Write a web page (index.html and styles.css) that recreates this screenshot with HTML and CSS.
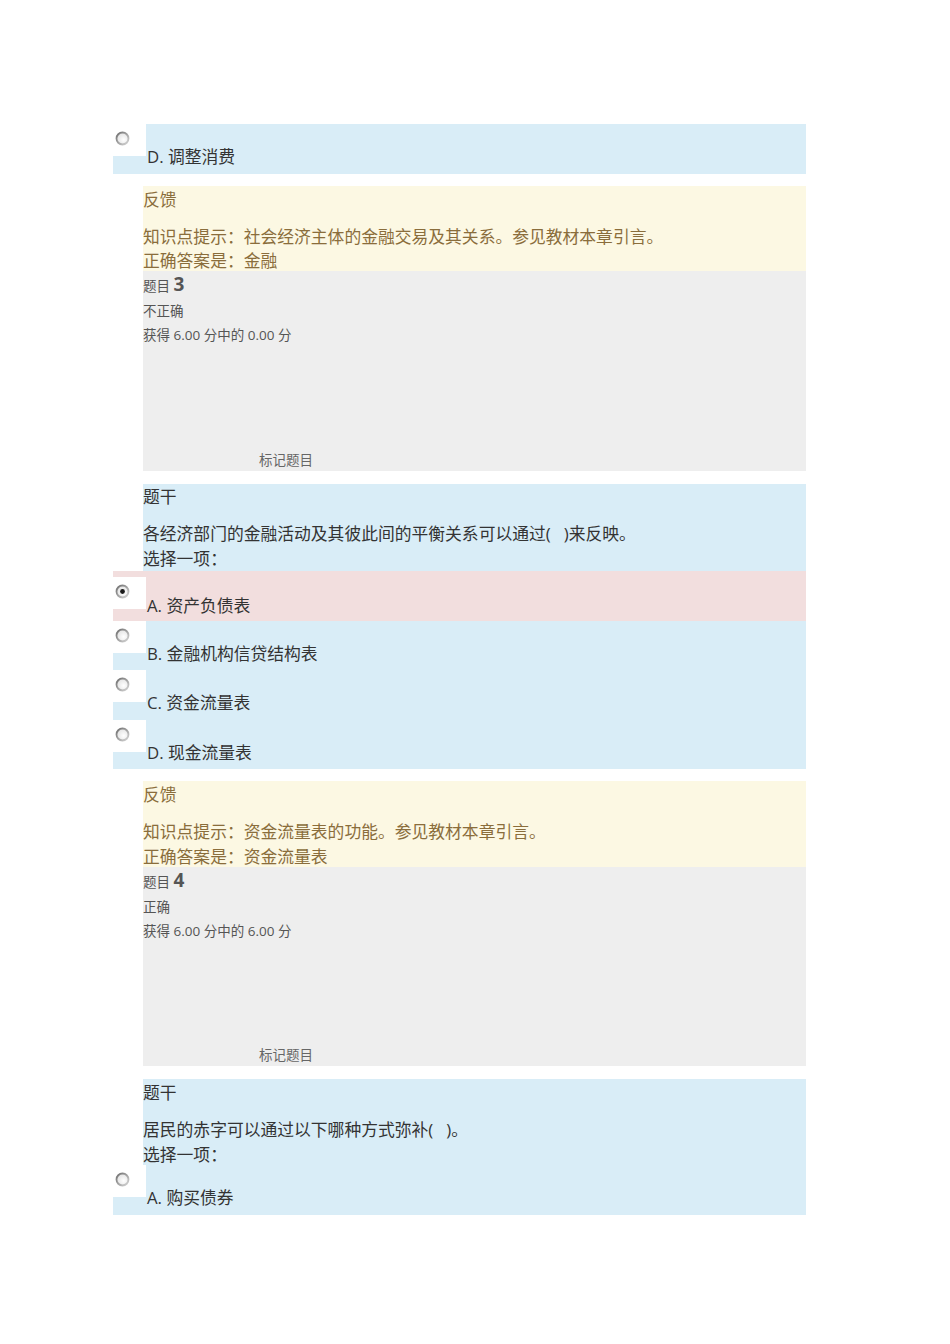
FILE: index.html
```html
<!DOCTYPE html>
<html lang="zh-CN">
<head>
<meta charset="utf-8">
<title>测验</title>
<link rel="stylesheet" href="styles.css">
</head>
<body>
<div class="page">

  <div class="opt info first">
    <div class="radio-box"><svg class="radio" width="15" height="15" viewBox="0 0 15 15"><defs><linearGradient id="rg1" x1="0" y1="0" x2="1" y2="1"><stop offset="0" stop-color="#6e6e6e"/><stop offset="1" stop-color="#d6d6d6"/></linearGradient><radialGradient id="rf1" cx="0.6" cy="0.6" r="0.6"><stop offset="0" stop-color="#ffffff"/><stop offset="1" stop-color="#e2e2e2"/></radialGradient></defs><circle cx="7.5" cy="7.5" r="6" fill="url(#rf1)" stroke="url(#rg1)" stroke-width="1.8"/></svg></div>
    <div class="label">D. 调整消费</div>
  </div>

  <div class="feedback">
    <div class="head">反馈</div>
    <div class="line">知识点提示：社会经济主体的金融交易及其关系。参见教材本章引言。</div>
    <div class="line">正确答案是：金融</div>
  </div>

  <div class="qinfo">
    <div class="no">题目 <span class="num">3</span></div>
    <div class="state">不正确</div>
    <div class="grade">获得 6.00 分中的 0.00 分</div>
    <div class="flag">标记题目</div>
  </div>

  <div class="qtext">
    <div class="head">题干</div>
    <div class="line">各经济部门的金融活动及其彼此间的平衡关系可以通过(&nbsp;&nbsp;&nbsp;)来反映。</div>
    <div class="line">选择一项：</div>
  </div>
  <div class="opt wrong">
    <div class="radio-box"><svg class="radio" width="15" height="15" viewBox="0 0 15 15"><circle cx="7.5" cy="7.5" r="6" fill="url(#rf1)" stroke="url(#rg1)" stroke-width="1.8"/><circle cx="7.5" cy="7.5" r="2.4" fill="#1a1a1a"/></svg></div>
    <div class="label">A. 资产负债表</div>
  </div>
  <div class="opt info">
    <div class="radio-box"><svg class="radio" width="15" height="15" viewBox="0 0 15 15"><circle cx="7.5" cy="7.5" r="6" fill="url(#rf1)" stroke="url(#rg1)" stroke-width="1.8"/></svg></div>
    <div class="label">B. 金融机构信贷结构表</div>
  </div>
  <div class="opt info">
    <div class="radio-box"><svg class="radio" width="15" height="15" viewBox="0 0 15 15"><circle cx="7.5" cy="7.5" r="6" fill="url(#rf1)" stroke="url(#rg1)" stroke-width="1.8"/></svg></div>
    <div class="label">C. 资金流量表</div>
  </div>
  <div class="opt info">
    <div class="radio-box"><svg class="radio" width="15" height="15" viewBox="0 0 15 15"><circle cx="7.5" cy="7.5" r="6" fill="url(#rf1)" stroke="url(#rg1)" stroke-width="1.8"/></svg></div>
    <div class="label">D. 现金流量表</div>
  </div>

  <div class="feedback second">
    <div class="head">反馈</div>
    <div class="line">知识点提示：资金流量表的功能。参见教材本章引言。</div>
    <div class="line">正确答案是：资金流量表</div>
  </div>

  <div class="qinfo second">
    <div class="no">题目 <span class="num">4</span></div>
    <div class="state">正确</div>
    <div class="grade">获得 6.00 分中的 6.00 分</div>
    <div class="flag">标记题目</div>
  </div>

  <div class="qtext second">
    <div class="head">题干</div>
    <div class="line">居民的赤字可以通过以下哪种方式弥补(&nbsp;&nbsp;&nbsp;)。</div>
    <div class="line">选择一项：</div>
  </div>
  <div class="opt info last">
    <div class="radio-box"><svg class="radio" width="15" height="15" viewBox="0 0 15 15"><circle cx="7.5" cy="7.5" r="6" fill="url(#rf1)" stroke="url(#rg1)" stroke-width="1.8"/></svg></div>
    <div class="label">A. 购买债券</div>
  </div>

</div>
</body>
</html>
```

FILE: styles.css
```css
html, body {
  margin: 0;
  padding: 0;
  background: #ffffff;
}

body {
  font-family: "Open Sans", "Noto Sans CJK SC", sans-serif;
  color: #333333;
  font-size: 16.8px;
}

.page {
  width: 693px;
  margin-left: 113px;
  padding-top: 124px;
  display: flex;
  flex-direction: column;
}

/* option rows */
.opt {
  display: flex;
  align-items: flex-start;
  height: 49.5px;
  flex: none;
}

.opt.first {
  height: 50px;
}

.opt.last {
  height: 50px;
}

.opt.info {
  background: #d9edf7;
}

.opt.wrong {
  background: #f2dede;
}

.radio-box {
  width: 33px;
  height: 32px;
  background: #ffffff;
  flex: none;
  position: relative;
}

.opt.wrong .radio-box {
  margin-top: 6px;
}

.radio {
  position: absolute;
  left: 2px;
  top: 7px;
}

.label {
  padding-top: 23px;
  line-height: 20px;
  padding-left: 1px;
  white-space: nowrap;
}

.opt.wrong .label {
  padding-top: 25px;
}

/* feedback */
.feedback {
  margin-top: 12px;
  margin-left: 30px;
  background: #fcf8e3;
  color: #8a6d3b;
  padding-top: 2px;
  height: 83px;
  flex: none;
}

.feedback.second {
  height: 84px;
}

.feedback .head,
.qtext .head {
  line-height: 24px;
  margin-bottom: 13px;
}

.feedback .line,
.qtext .line {
  line-height: 24px;
  white-space: nowrap;
}

.qtext .line + .line {
  line-height: 26px;
}

.feedback.second .line + .line {
  line-height: 26px;
}

/* question info */
.qinfo {
  margin-left: 30px;
  background: #eeeeee;
  color: #555555;
  font-size: 13.5px;
  padding-top: 1px;
  height: 199px;
  display: flex;
  flex-direction: column;
  flex: none;
}

.qinfo.second {
  height: 198px;
}

.qinfo .no,
.qinfo .state,
.qinfo .grade {
  line-height: 24.5px;
}

.qinfo .num {
  font-size: 19px;
  font-weight: 700;
  color: #555555;
}

.qinfo .flag {
  margin-top: auto;
  margin-left: 116px;
  line-height: 20px;
  margin-bottom: 1px;
  color: #666666;
}

/* question text */
.qtext {
  margin-top: 13px;
  margin-left: 30px;
  background: #d9edf7;
  padding-top: 1px;
  height: 86px;
  flex: none;
}

.qtext.second {
  padding-top: 2px;
  height: 84px;
}
```
